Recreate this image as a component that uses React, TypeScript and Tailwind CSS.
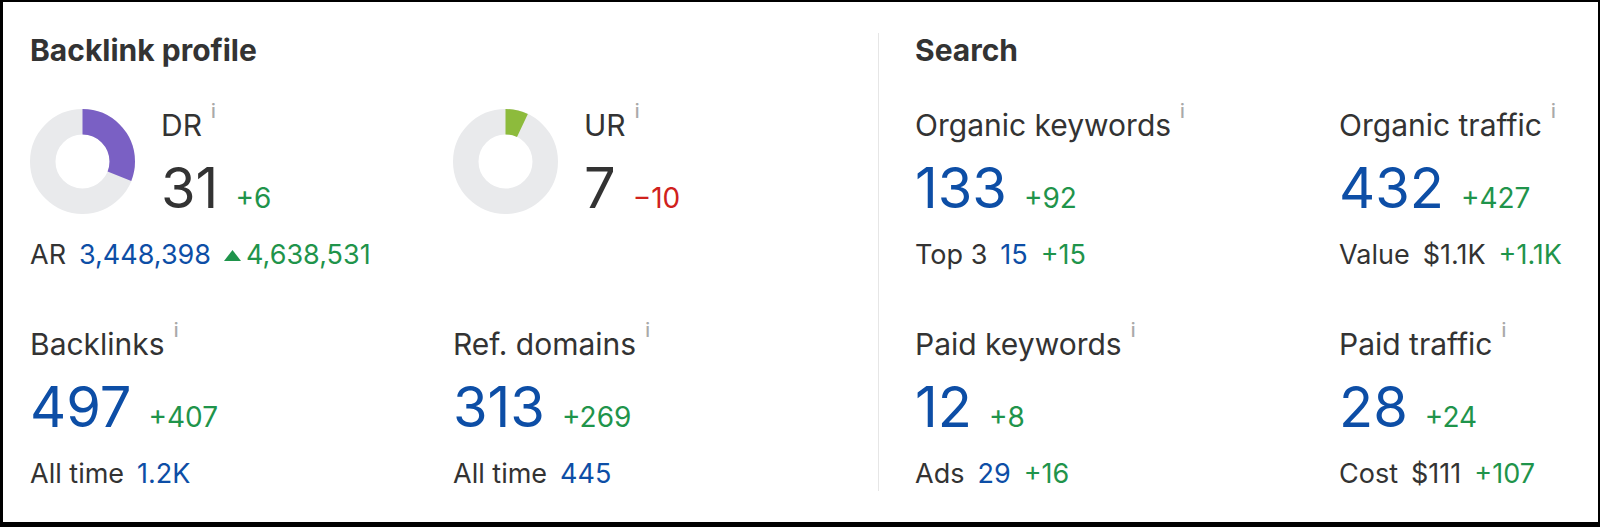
import React from "react";

const BLUE = "text-[#0d4ea6]";

function Info() {
  return (
    <span className="relative -top-[18px] ml-[9px] text-[19px] font-medium leading-none text-[#a9a9a9]">
      i
    </span>
  );
}

function Donut({ pct, color }: { pct: number; color: string }) {
  const r = 39.75;
  const c = 2 * Math.PI * r;
  return (
    <svg width="105" height="105" viewBox="0 0 105 105" className="shrink-0">
      <circle cx="52.5" cy="52.5" r={r} fill="none" stroke="#e9eaec" strokeWidth="25.5" />
      <circle
        cx="52.5"
        cy="52.5"
        r={r}
        fill="none"
        stroke={color}
        strokeWidth="25.5"
        strokeDasharray={`${(c * pct) / 100} ${c}`}
        transform="rotate(-90 52.5 52.5)"
      />
    </svg>
  );
}

function Label({ text }: { text: string }) {
  return (
    <div className="flex h-[34px] items-baseline text-[30px] leading-[32px] text-[#333]">
      <span>{text}</span>
      <Info />
    </div>
  );
}

function NumberRow({
  value,
  delta,
  dark,
  negative,
}: {
  value: string;
  delta: string;
  dark?: boolean;
  negative?: boolean;
}) {
  return (
    <div className="mt-[15px] flex h-[60px] items-baseline">
      <span className={`text-[56px] leading-[60px] ${dark ? "text-[#333]" : BLUE}`}>{value}</span>
      <span
        className={`ml-[17px] text-[28px] leading-[30px] ${negative ? "text-[#d0211c]" : "text-[#1f944b]"}`}
      >
        {delta}
      </span>
    </div>
  );
}

type Part = { t: string; c: "gray" | "blue" | "green" | "tri" };

function SubRow({ parts }: { parts: Part[] }) {
  return (
    <div className="mt-[21px] flex h-[32px] items-baseline gap-[13px] text-[27px] leading-[32px]">
      {parts.map((p, i) => {
        if (p.c === "tri")
          return (
            <span key={i} className="flex items-baseline text-[#1f944b]">
              <svg width="17" height="11" viewBox="0 0 17 11" className="mr-[5px] self-center">
                <path d="M8.5 0 L17 11 L0 11 Z" fill="#1f944b" />
              </svg>
              {p.t}
            </span>
          );
        const cls =
          p.c === "gray" ? "text-[#333]" : p.c === "blue" ? BLUE : "text-[#1f944b]";
        return (
          <span key={i} className={cls}>
            {p.t}
          </span>
        );
      })}
    </div>
  );
}

function DonutItem({
  pct,
  color,
  label,
  value,
  delta,
  negative,
  sub,
}: {
  pct: number;
  color: string;
  label: string;
  value: string;
  delta: string;
  negative?: boolean;
  sub?: Part[];
}) {
  return (
    <div>
      <div className="flex gap-[26px]">
        <Donut pct={pct} color={color} />
        <div>
          <Label text={label} />
          <NumberRow value={value} delta={delta} dark negative={negative} />
        </div>
      </div>
      {sub ? <SubRow parts={sub} /> : <div className="mt-[21px] h-[32px]" />}
    </div>
  );
}

function Metric({ label, value, delta, sub }: { label: string; value: string; delta: string; sub: Part[] }) {
  return (
    <div>
      <Label text={label} />
      <NumberRow value={value} delta={delta} />
      <SubRow parts={sub} />
    </div>
  );
}

function Heading({ text }: { text: string }) {
  return <h2 className="h-[38px] text-[30px] font-bold leading-[35px] text-[#333]">{text}</h2>;
}

export default function App() {
  return (
    <div className="h-[527px] w-[1600px] bg-white font-['Inter',sans-serif]">
      <div className="flex h-[527px] border-b-[5px] border-l-[3px] border-r-2 border-t-2 border-black pt-[31px]">
        <section className="w-[875px] shrink-0 pl-[27px]">
          <Heading text="Backlink profile" />
          <div className="mt-[38px] grid grid-cols-[423px_423px] gap-y-[57px]">
            <DonutItem
              pct={31}
              color="#7a60c4"
              label="DR"
              value="31"
              delta="+6"
              sub={[
                { t: "AR", c: "gray" },
                { t: "3,448,398", c: "blue" },
                { t: "4,638,531", c: "tri" },
              ]}
            />
            <DonutItem pct={7} color="#8dbb3c" label="UR" value="7" delta="−10" negative />
            <Metric
              label="Backlinks"
              value="497"
              delta="+407"
              sub={[
                { t: "All time", c: "gray" },
                { t: "1.2K", c: "blue" },
              ]}
            />
            <Metric
              label="Ref. domains"
              value="313"
              delta="+269"
              sub={[
                { t: "All time", c: "gray" },
                { t: "445", c: "blue" },
              ]}
            />
          </div>
        </section>
        <section className="h-[458px] flex-1 border-l border-[#e6e6e6] pl-[36px]">
          <Heading text="Search" />
          <div className="mt-[38px] grid grid-cols-[424px_260px] gap-y-[57px]">
            <Metric
              label="Organic keywords"
              value="133"
              delta="+92"
              sub={[
                { t: "Top 3", c: "gray" },
                { t: "15", c: "blue" },
                { t: "+15", c: "green" },
              ]}
            />
            <Metric
              label="Organic traffic"
              value="432"
              delta="+427"
              sub={[
                { t: "Value", c: "gray" },
                { t: "$1.1K", c: "gray" },
                { t: "+1.1K", c: "green" },
              ]}
            />
            <Metric
              label="Paid keywords"
              value="12"
              delta="+8"
              sub={[
                { t: "Ads", c: "gray" },
                { t: "29", c: "blue" },
                { t: "+16", c: "green" },
              ]}
            />
            <Metric
              label="Paid traffic"
              value="28"
              delta="+24"
              sub={[
                { t: "Cost", c: "gray" },
                { t: "$111", c: "gray" },
                { t: "+107", c: "green" },
              ]}
            />
          </div>
        </section>
      </div>
    </div>
  );
}
